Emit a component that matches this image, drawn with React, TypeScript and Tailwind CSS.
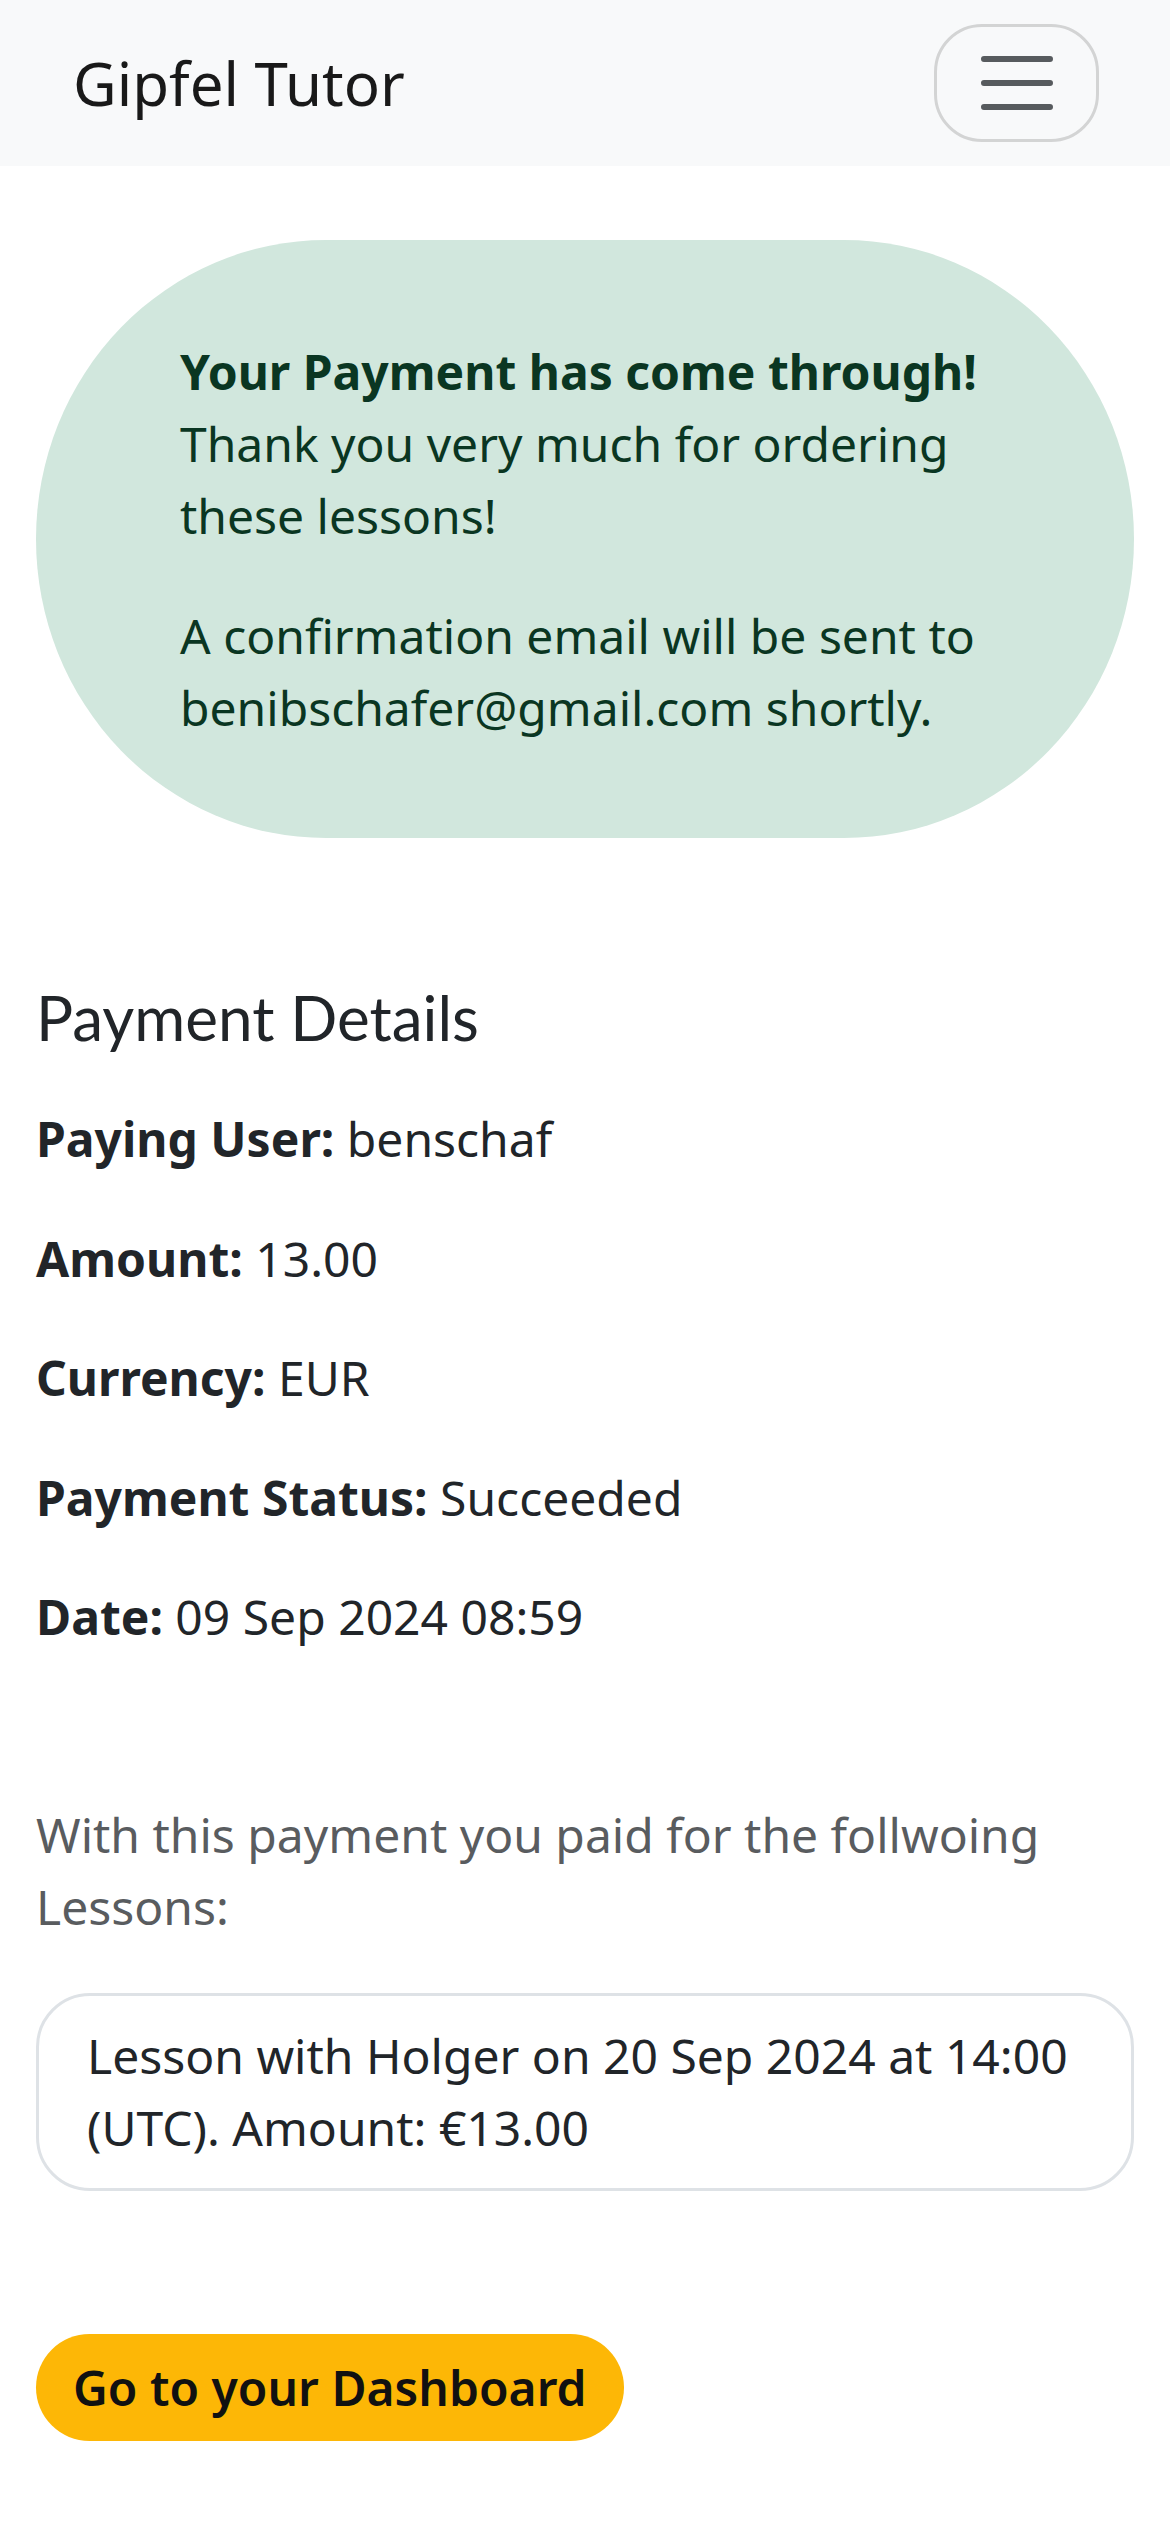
import React from "react";

export default function App() {
  const body = { fontFamily: '"Noto Sans", "Open Sans", sans-serif' };
  return (
    <div className="min-h-[2532px] bg-white text-[#212529]" style={body}>
      <nav className="h-[166px] bg-[#f8f9fa] flex items-center justify-between pl-[73px] pr-[71px]">
        <span className="text-[60px] leading-[90px] text-black/90">Gipfel Tutor</span>
        <button className="w-[165px] h-[118px] rounded-[48px] border-[3px] border-black/15 flex items-center justify-center">
          <svg width="90" height="90" viewBox="0 0 30 30">
            <path d="M4 7h22M4 15h22M4 23h22" stroke="rgba(33,37,41,0.75)" strokeWidth="2" strokeLinecap="round" strokeMiterlimit="10" />
          </svg>
        </button>
      </nav>

      <main className="px-[36px]">
        <div className="mt-[74px] h-[598px] bg-[#d1e7dd] text-[#0a3622] rounded-[290px/299px] px-[144px] py-[96px] text-[48px] leading-[72px]">
          <p className="mb-[48px]">
            <strong className="font-bold">Your Payment has come through!</strong>
            <br />
            Thank you very much for ordering these lessons!
          </p>
          <p>A confirmation email will be sent to benibschafer@gmail.com shortly.</p>
        </div>

        <h3
          className="mt-[140px] mb-[47px] text-[62px] leading-[78px] font-normal"
          style={{ fontFamily: 'Lato, "Noto Sans", sans-serif' }}
        >
          Payment Details
        </h3>

        <div className="text-[48px] leading-[72px]">
          <p className="mb-[48px]"><strong className="font-bold">Paying User:</strong> benschaf</p>
          <p className="mb-[47px]"><strong className="font-bold">Amount:</strong> 13.00</p>
          <p className="mb-[48px]"><strong className="font-bold">Currency:</strong> EUR</p>
          <p className="mb-[47px]"><strong className="font-bold">Payment Status:</strong> Succeeded</p>
          <p><strong className="font-bold">Date:</strong> 09 Sep 2024 08:59</p>
        </div>

        <p className="mt-[146px] mb-[50px] text-[48px] leading-[72px] text-[#595c5f]">
          With this payment you paid for the follwoing Lessons:
        </p>

        <ul className="border-[3px] border-[#dee2e6] rounded-[54px] px-[48px] py-[24px] text-[48px] leading-[72px]">
          <li>Lesson with Holger on 20 Sep 2024 at 14:00 (UTC). Amount: €13.00</li>
        </ul>

        <button className="mt-[143px] h-[107px] px-[37px] rounded-[54px] bg-[#fdb706] text-[#111111] text-[48px] font-semibold leading-[72px]">
          Go to your Dashboard
        </button>
      </main>
    </div>
  );
}
